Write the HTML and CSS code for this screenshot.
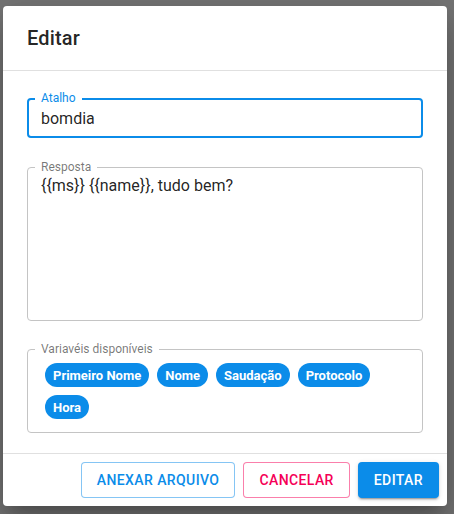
FILE: index.html
```html
<!DOCTYPE html>
<html lang="pt">
<head>
<meta charset="utf-8">
<title>Editar</title>
<link rel="stylesheet" href="styles.css">
</head>
<body>
<div class="dialog">
  <header class="dialog-title">Editar</header>
  <main class="dialog-content">
    <div class="field field-focused">
      <span class="field-label">Atalho</span>
      <div class="field-value">bomdia</div>
    </div>
    <div class="field field-multiline">
      <span class="field-label">Resposta</span>
      <div class="field-value">{{ms}} {{name}}, tudo bem?</div>
    </div>
    <div class="field field-chips">
      <span class="field-label">Variavéis disponíveis</span>
      <div class="chips">
        <span class="chip">Primeiro Nome</span>
        <span class="chip">Nome</span>
        <span class="chip">Saudação</span>
        <span class="chip">Protocolo</span>
        <span class="chip">Hora</span>
      </div>
    </div>
  </main>
  <footer class="dialog-actions">
    <button class="btn btn-outlined-primary">Anexar arquivo</button>
    <button class="btn btn-outlined-secondary">Cancelar</button>
    <button class="btn btn-contained">Editar</button>
  </footer>
</div>
</body>
</html>
```
FILE: styles.css
```css
* { box-sizing: border-box; }
html, body { margin: 0; padding: 0; }
body {
  background: #757575;
  font-family: Roboto, "Liberation Sans", sans-serif;
  width: 454px;
  height: 514px;
  overflow: hidden;
}
.dialog {
  margin: 6px 0 0 3px;
  width: 444px;
  height: 500px;
  background: #fff;
  border-radius: 4px;
  box-shadow: 0 11px 15px -7px rgba(0,0,0,0.2), 0 24px 38px 3px rgba(0,0,0,0.14), 0 9px 46px 8px rgba(0,0,0,0.12);
  display: flex;
  flex-direction: column;
}
.dialog-title {
  height: 65px;
  padding: 0 24px;
  display: flex;
  align-items: center;
  font-size: 20px;
  font-weight: 500;
  letter-spacing: 0.15px;
  color: rgba(0,0,0,0.87);
  border-bottom: 1px solid #e0e0e0;
}
.dialog-content {
  flex: 1;
  padding: 27px 24px 0 24px;
  display: flex;
  flex-direction: column;
  gap: 29px;
}
.field {
  position: relative;
  border: 1px solid #c4c4c4;
  border-radius: 4px;
}
.field-label {
  position: absolute;
  top: -8px;
  left: 7px;
  padding: 0 6px;
  background: #fff;
  font-size: 12px;
  line-height: 14px;
  color: rgba(0,0,0,0.54);
  white-space: nowrap;
}
.field-value {
  font-size: 16px;
  line-height: 19px;
  color: rgba(0,0,0,0.87);
  padding-left: 13px;
}
.field-focused {
  height: 40px;
  border: 2px solid #0b8ce9;
  display: flex;
  align-items: center;
}
.field-focused .field-label {
  top: -9px;
  left: 6px;
  color: #0b8ce9;
}
.field-focused .field-value {
  padding-left: 12px;
}
.field-multiline {
  height: 154px;
  padding-top: 8px;
}
.field-chips {
  margin-top: -1px;
  padding: 13px 16px 13px 17px;
}
.chips {
  display: flex;
  flex-wrap: wrap;
  gap: 8px;
}
.chip {
  height: 24px;
  padding: 0 8px;
  border-radius: 12px;
  background: #0b8ce9;
  color: #fff;
  font-size: 13px;
  font-weight: 700;
  display: inline-flex;
  align-items: center;
}
.dialog-actions {
  border-top: 1px solid #e0e0e0;
  padding: 8px;
  display: flex;
  justify-content: flex-end;
  gap: 8px;
}
.btn {
  height: 36px;
  font-family: Roboto, "Liberation Sans", sans-serif;
  font-size: 14px;
  font-weight: 500;
  letter-spacing: 0.4px;
  text-transform: uppercase;
  border-radius: 4px;
  background: #fff;
  cursor: pointer;
  padding: 0 15px;
}
.btn-outlined-primary {
  color: #0b8ce9;
  border: 1px solid rgba(11,140,233,0.5);
}
.btn-outlined-secondary {
  color: #f50057;
  border: 1px solid rgba(245,0,87,0.5);
}
.btn-contained {
  background: #0b8ce9;
  color: #fff;
  border: none;
  padding: 0 16px;
  box-shadow: 0 3px 1px -2px rgba(0,0,0,0.2), 0 2px 2px 0 rgba(0,0,0,0.14), 0 1px 5px 0 rgba(0,0,0,0.12);
}
```
